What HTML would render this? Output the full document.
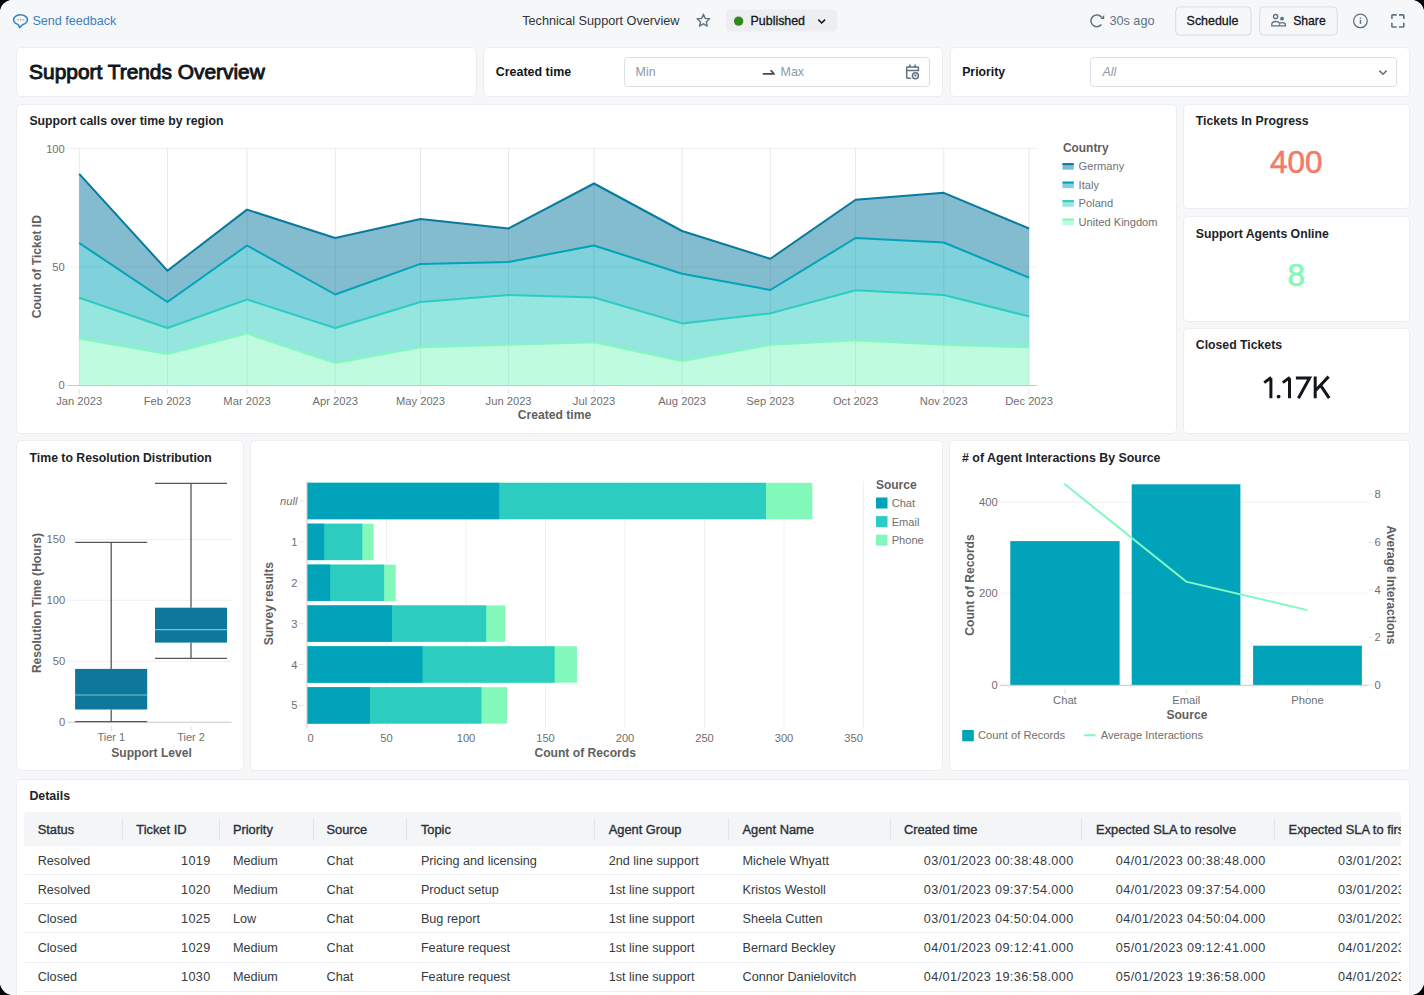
<!DOCTYPE html>
<html><head><meta charset="utf-8">
<style>
html,body{margin:0;padding:0;background:#000;width:1424px;height:995px;overflow:hidden}
*{box-sizing:border-box}
#page{position:absolute;left:0;top:0;width:1424px;height:995px;background:#f6f7f9;overflow:hidden;font-family:"Liberation Sans",sans-serif;color:#11171c}
.card{position:absolute;background:#fff;border:1px solid #ebedf0;border-radius:4.5px}
.t{position:absolute;white-space:nowrap;line-height:1}
.b{font-weight:bold}
svg{position:absolute;left:0;top:0}
</style></head><body><div id="page">


<!-- cards -->
<div class="card" style="left:16.3px;top:47px;width:461.0px;height:49.7px"></div>
<div class="card" style="left:483.2px;top:47px;width:460.3px;height:49.7px"></div>
<div class="card" style="left:949.5px;top:47px;width:460.3px;height:49.7px"></div>

<div class="card" style="left:16.3px;top:103.8px;width:1160.7px;height:330.1px"></div>
<div class="card" style="left:1183.4px;top:103.8px;width:226.4px;height:105.5px"></div>
<div class="card" style="left:1183.4px;top:216.1px;width:226.4px;height:105.5px"></div>
<div class="card" style="left:1183.4px;top:328.4px;width:226.4px;height:105.5px"></div>

<div class="card" style="left:16.3px;top:440.2px;width:228.0px;height:331.1px"></div>
<div class="card" style="left:249.9px;top:440.2px;width:693.6px;height:331.1px"></div>
<div class="card" style="left:949.0px;top:440.2px;width:460.8px;height:331.1px"></div>

<div class="card" style="left:16.3px;top:778.5px;width:1393.5px;height:240.0px"></div>


<!-- top bar -->
<svg width="1424" height="40" style="left:0;top:0">
  <path d="M18.3 24.63A6.9 5.1 0 1 1 22.5 24.68L19.6 27.6Z" fill="none" stroke="#3a80c2" stroke-width="1.5" stroke-linejoin="round"/>
  <g fill="#3a80c2" fill-opacity="0.75"><circle cx="18" cy="19.8" r=".75"/><circle cx="20.6" cy="19.8" r=".75"/><circle cx="23.2" cy="19.8" r=".75"/></g>
  <path d="M703.40 14.20L705.16 18.37L709.68 18.76L706.25 21.73L707.28 26.14L703.40 23.80L699.52 26.14L700.55 21.73L697.12 18.76L701.64 18.37Z" fill="none" stroke="#5f7281" stroke-width="1.35" stroke-linejoin="round"/>
  <rect x="726.1" y="9.6" width="110.8" height="21.9" rx="4" fill="#eceef1"/>
  <circle cx="738.6" cy="21.1" r="4.7" fill="#2f8a1c"/>
  <path d="M818.3 19.6l3.4 3.4 3.4-3.4" fill="none" stroke="#11171c" stroke-width="1.5"/>
  <path d="M1101.6 17.3A5.9 5.9 0 1 0 1101.4 24.6" fill="none" stroke="#5f7281" stroke-width="1.5"/><path d="M1104.2 15.1V18.9H1100.3Z" fill="#5f7281"/>
  
  <rect x="1175.7" y="6.9" width="75.3" height="28.2" rx="4" fill="#f6f7f9" stroke="#d6dce2" stroke-width="1"/>
  <rect x="1259.7" y="6.9" width="77.5" height="28.2" rx="4" fill="#f6f7f9" stroke="#d6dce2" stroke-width="1"/>
  <g fill="none" stroke="#5f7281" stroke-width="1.35">
    <circle cx="1275.6" cy="16.6" r="2.1"/>
    <path d="M1271.8 25.9H1285.4V24.8C1285.4 23.4 1284 22.6 1282.2 22.6C1281.2 22.6 1280.3 22.9 1279.7 23.3C1279 22.1 1277.5 21.5 1275.6 21.5C1273.4 21.5 1271.8 22.6 1271.8 24.6Z"/>
    <path d="M1279.5 25.9V24.2"/>
  </g>
  <circle cx="1282" cy="18.7" r="1.9" fill="#5f7281"/>
  <circle cx="1360.4" cy="20.9" r="6.8" fill="none" stroke="#5f7281" stroke-width="1.3"/>
  <rect x="1359.75" y="19.9" width="1.4" height="4" fill="#5f7281"/>
  <circle cx="1360.45" cy="18.2" r=".8" fill="#5f7281"/>
  <path d="M1391.9 18.9V15.6Q1391.9 14.9 1392.6 14.9H1396.7M1399 14.9H1403.1Q1403.8 14.9 1403.8 15.6V18.9M1403.8 22.8V26.3Q1403.8 27 1403.1 27H1399M1396.7 27H1392.6Q1391.9 27 1391.9 26.3V22.8" fill="none" stroke="#5f7281" stroke-width="1.6"/>
</svg>
<div class="t" style="left:32.4px;top:14.6px;font-size:12.6px;color:#3a80c2">Send feedback</div>
<div class="t" style="left:522.2px;top:14.5px;font-size:12.7px;color:#2e3439">Technical Support Overview</div>
<div class="t" style="left:750.6px;top:14.6px;font-size:12.4px;color:#11171c;-webkit-text-stroke:0.3px #11171c">Published</div>
<div class="t" style="left:1109.4px;top:14.5px;font-size:12.7px;color:#5f7281">30s ago</div>
<div class="t" style="left:1186.6px;top:14.6px;font-size:12.45px;color:#11171c;-webkit-text-stroke:0.3px #11171c">Schedule</div>
<div class="t" style="left:1293.2px;top:14.6px;font-size:12.2px;color:#11171c;-webkit-text-stroke:0.3px #11171c">Share</div>

<!-- filter row -->
<div class="t" style="left:29.1px;top:62.0px;font-size:20.9px;color:#11171c;-webkit-text-stroke:0.95px #11171c">Support Trends Overview</div>
<div class="t b" style="left:495.8px;top:66px;font-size:12.45px;color:#11171c">Created time</div>
<div style="position:absolute;left:624.1px;top:57.1px;width:305.5px;height:29.5px;border:1px solid #dae0e6;border-radius:4px;background:#fff"></div>
<div class="t" style="left:635.6px;top:66px;font-size:12.4px;color:#8c9aa6">Min</div>
<div class="t" style="left:780.6px;top:66px;font-size:12.4px;color:#8c9aa6">Max</div>
<svg width="1424" height="100" style="left:0;top:0">
  <path d="M762.8 73.9H774L770.7 70.3" fill="none" stroke="#454b51" stroke-width="1.7" stroke-linejoin="round"/>
  <g fill="none" stroke="#5f7281" stroke-width="1.5" stroke-linecap="round" stroke-linejoin="round">
    <path d="M910.4 78.2H907.4Q906.7 78.2 906.7 77.5V67.6Q906.7 66.9 907.4 66.9H917.7Q918.4 66.9 918.4 67.6V70.5"/>
    <path d="M906.7 70.5H918.4"/>
    <path d="M909.9 65V66.9M915.1 65V66.9"/>
    <circle cx="915.4" cy="75.8" r="3"/>
    <path d="M914.6 74.9L915.4 76.2L916.2 74.9" stroke-width="1.1"/>
  </g>
  <path d="M1379.4 70.6l3.6 3.6 3.6-3.6" fill="none" stroke="#5f7281" stroke-width="1.6"/>
</svg>
<div class="t b" style="left:962.2px;top:66px;font-size:12.25px;color:#11171c">Priority</div>
<div style="position:absolute;left:1090.4px;top:57.1px;width:306.3px;height:29.5px;border:1px solid #dae0e6;border-radius:4px;background:transparent"></div>
<div class="t" style="left:1102.4px;top:66px;font-size:12.4px;color:#8c9aa6;font-style:italic">All</div>


<svg width="1424" height="440" style="left:0;top:0">
<g stroke="#eff0f1" stroke-width="1">
<path d="M67.3 148.5H1037.4M67.3 266.9H1037.4"/>
<path d="M79.2 148.5V385.3M167.4 148.5V385.3M247.0 148.5V385.3M335.2 148.5V385.3M420.5 148.5V385.3M508.6 148.5V385.3M594.0 148.5V385.3M682.1 148.5V385.3M770.3 148.5V385.3M855.6 148.5V385.3M943.8 148.5V385.3M1029.1 148.5V385.3"/>
</g>
<path d="M79.2,338.5 L167.4,354.0 L247.0,333.5 L335.2,363.0 L420.5,347.3 L508.6,344.8 L594.0,342.3 L682.1,361.1 L770.3,344.8 L855.6,340.3 L943.8,344.8 L1029.1,347.3 L1029.1,385.3 L943.8,385.3 L855.6,385.3 L770.3,385.3 L682.1,385.3 L594.0,385.3 L508.6,385.3 L420.5,385.3 L335.2,385.3 L247.0,385.3 L167.4,385.3 L79.2,385.3Z" fill="#80f8c0" fill-opacity="0.5"/>
<path d="M79.2,297.8 L167.4,328.0 L247.0,299.5 L335.2,328.0 L420.5,302.0 L508.6,295.0 L594.0,297.5 L682.1,323.4 L770.3,313.4 L855.6,290.3 L943.8,295.0 L1029.1,316.4 L1029.1,347.3 L943.8,344.8 L855.6,340.3 L770.3,344.8 L682.1,361.1 L594.0,342.3 L508.6,344.8 L420.5,347.3 L335.2,363.0 L247.0,333.5 L167.4,354.0 L79.2,338.5Z" fill="#2ccdc0" fill-opacity="0.5"/>
<path d="M79.2,243.0 L167.4,302.0 L247.0,245.5 L335.2,294.5 L420.5,263.9 L508.6,261.9 L594.0,245.5 L682.1,273.7 L770.3,290.0 L855.6,238.0 L943.8,242.5 L1029.1,277.7 L1029.1,316.4 L943.8,295.0 L855.6,290.3 L770.3,313.4 L682.1,323.4 L594.0,297.5 L508.6,295.0 L420.5,302.0 L335.2,328.0 L247.0,299.5 L167.4,328.0 L79.2,297.8Z" fill="#00a3b9" fill-opacity="0.5"/>
<path d="M79.2,173.9 L167.4,270.7 L247.0,209.6 L335.2,238.0 L420.5,219.1 L508.6,228.4 L594.0,183.5 L682.1,231.0 L770.3,258.8 L855.6,199.8 L943.8,192.8 L1029.1,228.5 L1029.1,277.7 L943.8,242.5 L855.6,238.0 L770.3,290.0 L682.1,273.7 L594.0,245.5 L508.6,261.9 L420.5,263.9 L335.2,294.5 L247.0,245.5 L167.4,302.0 L79.2,243.0Z" fill="#077a9d" fill-opacity="0.5"/>
<g stroke="#000" stroke-opacity="0.03" stroke-width="1">
<path d="M79.2 148.5V385.3M167.4 148.5V385.3M247.0 148.5V385.3M335.2 148.5V385.3M420.5 148.5V385.3M508.6 148.5V385.3M594.0 148.5V385.3M682.1 148.5V385.3M770.3 148.5V385.3M855.6 148.5V385.3M943.8 148.5V385.3M1029.1 148.5V385.3"/>
</g>
<polyline points="79.2,338.5 167.4,354.0 247.0,333.5 335.2,363.0 420.5,347.3 508.6,344.8 594.0,342.3 682.1,361.1 770.3,344.8 855.6,340.3 943.8,344.8 1029.1,347.3" fill="none" stroke="#80f8c0" stroke-width="2" stroke-linejoin="round"/>
<polyline points="79.2,297.8 167.4,328.0 247.0,299.5 335.2,328.0 420.5,302.0 508.6,295.0 594.0,297.5 682.1,323.4 770.3,313.4 855.6,290.3 943.8,295.0 1029.1,316.4" fill="none" stroke="#2ccdc0" stroke-width="2" stroke-linejoin="round"/>
<polyline points="79.2,243.0 167.4,302.0 247.0,245.5 335.2,294.5 420.5,263.9 508.6,261.9 594.0,245.5 682.1,273.7 770.3,290.0 855.6,238.0 943.8,242.5 1029.1,277.7" fill="none" stroke="#00a3b9" stroke-width="2" stroke-linejoin="round"/>
<polyline points="79.2,173.9 167.4,270.7 247.0,209.6 335.2,238.0 420.5,219.1 508.6,228.4 594.0,183.5 682.1,231.0 770.3,258.8 855.6,199.8 943.8,192.8 1029.1,228.5" fill="none" stroke="#077a9d" stroke-width="2" stroke-linejoin="round"/>
<path d="M67.3 385.5H1037.4" stroke="#c8c8c8" stroke-width="1"/>
<path d="M79.2 389V394M167.4 389V394M247.0 389V394M335.2 389V394M420.5 389V394M508.6 389V394M594.0 389V394M682.1 389V394M770.3 389V394M855.6 389V394M943.8 389V394M1029.1 389V394" stroke="#e3e3e3" stroke-width="1"/>
<g font-family="Liberation Sans" font-size="11.2" fill="#6f6f6f" text-anchor="end">
<text x="64.8" y="152.5">100</text><text x="64.8" y="271">50</text><text x="64.8" y="389.4">0</text>
</g>
<g font-family="Liberation Sans" font-size="11.2" fill="#6f6f6f" text-anchor="middle">
<text x="79.2" y="404.5">Jan 2023</text>
<text x="167.4" y="404.5">Feb 2023</text>
<text x="247.0" y="404.5">Mar 2023</text>
<text x="335.2" y="404.5">Apr 2023</text>
<text x="420.5" y="404.5">May 2023</text>
<text x="508.6" y="404.5">Jun 2023</text>
<text x="594.0" y="404.5">Jul 2023</text>
<text x="682.1" y="404.5">Aug 2023</text>
<text x="770.3" y="404.5">Sep 2023</text>
<text x="855.6" y="404.5">Oct 2023</text>
<text x="943.8" y="404.5">Nov 2023</text>
<text x="1029.1" y="404.5">Dec 2023</text>
</g>
<g font-family="Liberation Sans" font-size="12.1" font-weight="bold" fill="#5f5f5f" text-anchor="middle">
<text x="554.5" y="418.9">Created time</text>
<text transform="translate(40.6 266.7) rotate(-90)">Count of Ticket ID</text>
</g>
<text x="1063" y="151.6" font-family="Liberation Sans" font-size="11.9" font-weight="bold" fill="#5f5f5f">Country</text>
<rect x="1062.5" y="163.1" width="11.3" height="6.6" fill="#077a9d" fill-opacity="0.5"/>
<rect x="1062.5" y="163.1" width="11.3" height="2" fill="#077a9d"/>
<text x="1078.6" y="170.2" font-family="Liberation Sans" font-size="11.1" fill="#6f6f6f">Germany</text>
<rect x="1062.5" y="181.6" width="11.3" height="6.6" fill="#00a3b9" fill-opacity="0.5"/>
<rect x="1062.5" y="181.6" width="11.3" height="2" fill="#00a3b9"/>
<text x="1078.6" y="188.7" font-family="Liberation Sans" font-size="11.1" fill="#6f6f6f">Italy</text>
<rect x="1062.5" y="200.1" width="11.3" height="6.6" fill="#2ccdc0" fill-opacity="0.5"/>
<rect x="1062.5" y="200.1" width="11.3" height="2" fill="#2ccdc0"/>
<text x="1078.6" y="207.2" font-family="Liberation Sans" font-size="11.1" fill="#6f6f6f">Poland</text>
<rect x="1062.5" y="218.6" width="11.3" height="6.6" fill="#80f8c0" fill-opacity="0.5"/>
<rect x="1062.5" y="218.6" width="11.3" height="2" fill="#80f8c0"/>
<text x="1078.6" y="225.7" font-family="Liberation Sans" font-size="11.1" fill="#6f6f6f">United Kingdom</text>
</svg>
<!-- titles -->
<div class="t b" style="left:29.4px;top:114.9px;font-size:12.25px;color:#1c2328">Support calls over time by region</div>
<div class="t b" style="left:1195.8px;top:114.9px;font-size:12.25px;color:#1c2328">Tickets In Progress</div>
<div class="t b" style="left:1195.8px;top:227.5px;font-size:12.25px;color:#1c2328">Support Agents Online</div>
<div class="t b" style="left:1195.8px;top:339.1px;font-size:12.25px;color:#1c2328">Closed Tickets</div>
<svg width="1424" height="440" style="left:0;top:0">
<g font-family="Liberation Sans" font-size="31.5" text-anchor="middle">
<text x="1296.2" y="173.2" fill="#f57a69" stroke="#f57a69" stroke-width="0.6">400</text>
<text x="1296.2" y="285.6" fill="#84f7bb" stroke="#84f7bb" stroke-width="0.7">8</text>
</g><g fill="none" stroke="#11171c" stroke-width="3" stroke-linejoin="miter">
<path d="M1270.9 398.2V378.2M1271.2 377.4L1264.2 382.6"/>
<path d="M1289.5 398.2V378.2M1289.8 377.4L1282.8 382.6"/>
<path d="M1295.9 378H1309.6L1298.4 398.2" stroke-linejoin="miter"/>
<path d="M1315.2 376.6V398.2M1315.8 390.2L1328.6 376.6M1320.6 385.4L1329.2 398.2"/>
</g><circle cx="1278.6" cy="396.6" r="1.9" fill="#11171c"/><g>
</g>
</svg>
<div class="t b" style="left:29.6px;top:452px;font-size:12.25px;color:#1c2328">Time to Resolution Distribution</div>
<div class="t b" style="left:962px;top:452px;font-size:12.4px;color:#1c2328"># of Agent Interactions By Source</div>
<div class="t b" style="left:29.4px;top:789.5px;font-size:12.4px;color:#1c2328">Details</div>

<svg width="1424" height="995" style="left:0;top:0">
<g stroke="#eff0f1" stroke-width="1">
<path d="M67.6 661.3H231.5"/>
<path d="M67.6 600.2H231.5"/>
<path d="M67.6 539.3H231.5"/>
</g>
<path d="M67.6 722.2H231.5" stroke="#c8c8c8" stroke-width="1"/>
<path d="M111.2 726V731M191 726V731" stroke="#e3e3e3"/>
<g font-family="Liberation Sans" font-size="11.2" fill="#6f6f6f" text-anchor="end">
<text x="65.2" y="726.2">0</text>
<text x="65.2" y="665.3">50</text>
<text x="65.2" y="604.2">100</text>
<text x="65.2" y="543.3">150</text>
</g>
<path d="M111.2 542.3V668.9M111.2 709.5V721.6M75.1 542.3H147.2M75.1 721.6H147.2" stroke="#575757" stroke-width="1.3"/>
<rect x="75.1" y="668.9" width="72.1" height="40.6" fill="#0d789c"/>
<path d="M75.1 695H147.2" stroke="#7fc3d6" stroke-width="1.2"/>
<path d="M191 483.3V607.7M191 642.6V658.3M155 483.3H227M155 658.3H227" stroke="#575757" stroke-width="1.3"/>
<rect x="155" y="607.7" width="72.0" height="34.9" fill="#0d789c"/>
<path d="M155 629.7H227" stroke="#7fc3d6" stroke-width="1.2"/>
<g font-family="Liberation Sans" font-size="11" fill="#6f6f6f" text-anchor="middle"><text x="111.3" y="741.1">Tier 1</text><text x="191" y="741.1">Tier 2</text></g>
<g font-family="Liberation Sans" font-size="12.1" font-weight="bold" fill="#5f5f5f" text-anchor="middle"><text x="151.5" y="756.6">Support Level</text>
<text transform="translate(40.6 603) rotate(-90)">Resolution Time (Hours)</text></g>
<g stroke="#eff0f1" stroke-width="1">
<path d="M386.5 481.3V728M466.0 481.3V728M545.5 481.3V728M625.0 481.3V728M704.5 481.3V728M784.0 481.3V728M863.5 481.3V728"/>
</g>
<rect x="307.0" y="482.8" width="505.4" height="36.4" fill="#82f9bb"/>
<rect x="307.0" y="482.8" width="459.0" height="36.4" fill="#2ccdc0"/>
<rect x="307.0" y="482.8" width="192.2" height="36.4" fill="#00a3b9"/>
<path d="M299 501.0H303.5" stroke="#e3e3e3"/>
<text x="297.5" y="505.0" font-family="Liberation Sans" font-size="11.2" fill="#6f6f6f" text-anchor="end" font-style="italic">null</text>
<rect x="307.0" y="523.7" width="66.6" height="36.4" fill="#82f9bb"/>
<rect x="307.0" y="523.7" width="55.3" height="36.4" fill="#2ccdc0"/>
<rect x="307.0" y="523.7" width="17.2" height="36.4" fill="#00a3b9"/>
<path d="M299 541.9H303.5" stroke="#e3e3e3"/>
<text x="297.5" y="545.9" font-family="Liberation Sans" font-size="11.2" fill="#6f6f6f" text-anchor="end">1</text>
<rect x="307.0" y="564.6" width="88.7" height="36.4" fill="#82f9bb"/>
<rect x="307.0" y="564.6" width="77.1" height="36.4" fill="#2ccdc0"/>
<rect x="307.0" y="564.6" width="23.2" height="36.4" fill="#00a3b9"/>
<path d="M299 582.8H303.5" stroke="#e3e3e3"/>
<text x="297.5" y="586.8" font-family="Liberation Sans" font-size="11.2" fill="#6f6f6f" text-anchor="end">2</text>
<rect x="307.0" y="605.4" width="198.1" height="36.4" fill="#82f9bb"/>
<rect x="307.0" y="605.4" width="179.2" height="36.4" fill="#2ccdc0"/>
<rect x="307.0" y="605.4" width="85.0" height="36.4" fill="#00a3b9"/>
<path d="M299 623.6H303.5" stroke="#e3e3e3"/>
<text x="297.5" y="627.6" font-family="Liberation Sans" font-size="11.2" fill="#6f6f6f" text-anchor="end">3</text>
<rect x="307.0" y="646.3" width="269.9" height="36.4" fill="#82f9bb"/>
<rect x="307.0" y="646.3" width="247.7" height="36.4" fill="#2ccdc0"/>
<rect x="307.0" y="646.3" width="115.5" height="36.4" fill="#00a3b9"/>
<path d="M299 664.5H303.5" stroke="#e3e3e3"/>
<text x="297.5" y="668.5" font-family="Liberation Sans" font-size="11.2" fill="#6f6f6f" text-anchor="end">4</text>
<rect x="307.0" y="687.2" width="200.1" height="36.4" fill="#82f9bb"/>
<rect x="307.0" y="687.2" width="174.5" height="36.4" fill="#2ccdc0"/>
<rect x="307.0" y="687.2" width="62.9" height="36.4" fill="#00a3b9"/>
<path d="M299 705.4H303.5" stroke="#e3e3e3"/>
<text x="297.5" y="709.4" font-family="Liberation Sans" font-size="11.2" fill="#6f6f6f" text-anchor="end">5</text>
<path d="M307 481.3V728" stroke="#c8c8c8" stroke-width="1"/>
<g font-family="Liberation Sans" font-size="11.2" fill="#6f6f6f">
<text x="307.5" y="742.4" text-anchor="start">0</text>
<text x="386.5" y="742.4" text-anchor="middle">50</text>
<text x="466.0" y="742.4" text-anchor="middle">100</text>
<text x="545.5" y="742.4" text-anchor="middle">150</text>
<text x="625.0" y="742.4" text-anchor="middle">200</text>
<text x="704.5" y="742.4" text-anchor="middle">250</text>
<text x="784.0" y="742.4" text-anchor="middle">300</text>
<text x="863.0" y="742.4" text-anchor="end">350</text>
</g>
<g font-family="Liberation Sans" font-size="12.1" font-weight="bold" fill="#5f5f5f" text-anchor="middle"><text x="585.2" y="756.7">Count of Records</text>
<text transform="translate(273.2 603.7) rotate(-90)">Survey results</text></g>
<text x="875.9" y="489" font-family="Liberation Sans" font-size="12" font-weight="bold" fill="#5f5f5f">Source</text>
<rect x="876" y="497.5" width="11.5" height="11" fill="#00a3b9"/>
<text x="891.7" y="507.0" font-family="Liberation Sans" font-size="11.1" fill="#6f6f6f">Chat</text>
<rect x="876" y="516.1" width="11.5" height="11" fill="#2ccdc0"/>
<text x="891.7" y="525.6" font-family="Liberation Sans" font-size="11.1" fill="#6f6f6f">Email</text>
<rect x="876" y="534.7" width="11.5" height="11" fill="#82f9bb"/>
<text x="891.7" y="544.2" font-family="Liberation Sans" font-size="11.1" fill="#6f6f6f">Phone</text>
<g stroke="#eff0f1" stroke-width="1"><path d="M1000.3 593.1H1368.5M1000.3 502.2H1368.5"/></g>
<rect x="1010.3" y="541.1" width="109.3" height="144.0" fill="#00a3b9"/>
<rect x="1131.7" y="484.3" width="108.7" height="200.8" fill="#00a3b9"/>
<rect x="1253.1" y="645.7" width="108.8" height="39.4" fill="#00a3b9"/>
<path d="M1000.3 685.3H1368.5" stroke="#c8c8c8" stroke-width="1"/>
<path d="M1064.8 689V694M1186.2 689V694M1307.5 689V694" stroke="#e3e3e3"/>
<polyline points="1064.3,483.8 1186.2,581.6 1307.3,610.1" fill="none" stroke="#80f8c0" stroke-width="2"/>
<g font-family="Liberation Sans" font-size="11.2" fill="#6f6f6f" text-anchor="end"><text x="997.7" y="506.2">400</text><text x="997.7" y="597.1">200</text><text x="997.7" y="689.1">0</text></g>
<g stroke="#e3e3e3"><path d="M1368.5 494.1H1373"/><path d="M1368.5 542.3H1373"/><path d="M1368.5 590H1373"/><path d="M1368.5 637.3H1373"/><path d="M1368.5 684.9H1373"/></g>
<g font-family="Liberation Sans" font-size="11.2" fill="#6f6f6f"><text x="1374.5" y="498.1">8</text><text x="1374.5" y="546.3">6</text><text x="1374.5" y="594.0">4</text><text x="1374.5" y="641.3">2</text><text x="1374.5" y="688.9">0</text></g>
<g font-family="Liberation Sans" font-size="11.2" fill="#6f6f6f" text-anchor="middle"><text x="1064.9" y="704">Chat</text><text x="1186.2" y="704">Email</text><text x="1307.5" y="704">Phone</text></g>
<g font-family="Liberation Sans" font-size="12.1" font-weight="bold" fill="#5f5f5f" text-anchor="middle"><text x="1186.9" y="719">Source</text>
<text transform="translate(973.5 585) rotate(-90)">Count of Records</text>
<text transform="translate(1387.3 585) rotate(90)">Average Interactions</text></g>
<rect x="962.2" y="730" width="11.6" height="11.3" fill="#00a3b9"/>
<text x="978" y="739.3" font-family="Liberation Sans" font-size="11.2" fill="#6f6f6f">Count of Records</text>
<path d="M1084.2 735.3H1095.5" stroke="#80f8c0" stroke-width="2"/>
<text x="1100.7" y="739.3" font-family="Liberation Sans" font-size="11.2" fill="#6f6f6f">Average Interactions</text>
</svg>
<div style="position:absolute;left:24.3px;top:812.3px;width:1377.1px;height:33.3px;background:#f4f5f7;border-radius:4px 4px 0 0"></div>
<div style="position:absolute;left:121.8px;top:817.7px;width:1px;height:22px;background:#e1e5e9"></div>
<div style="position:absolute;left:218.7px;top:817.7px;width:1px;height:22px;background:#e1e5e9"></div>
<div style="position:absolute;left:312.8px;top:817.7px;width:1px;height:22px;background:#e1e5e9"></div>
<div style="position:absolute;left:406.0px;top:817.7px;width:1px;height:22px;background:#e1e5e9"></div>
<div style="position:absolute;left:594.4px;top:817.7px;width:1px;height:22px;background:#e1e5e9"></div>
<div style="position:absolute;left:727.8px;top:817.7px;width:1px;height:22px;background:#e1e5e9"></div>
<div style="position:absolute;left:889.5px;top:817.7px;width:1px;height:22px;background:#e1e5e9"></div>
<div style="position:absolute;left:1081.2px;top:817.7px;width:1px;height:22px;background:#e1e5e9"></div>
<div style="position:absolute;left:1273.7px;top:817.7px;width:1px;height:22px;background:#e1e5e9"></div>
<div style="position:absolute;left:0;top:0;width:1401.4px;height:995px;overflow:hidden">
<div class="t" style="left:37.7px;top:823.5px;font-size:12.85px;color:#283037;-webkit-text-stroke:0.35px #283037">Status</div>
<div class="t" style="left:136.3px;top:823.5px;font-size:12.85px;color:#283037;-webkit-text-stroke:0.35px #283037">Ticket ID</div>
<div class="t" style="left:232.9px;top:823.5px;font-size:12.85px;color:#283037;-webkit-text-stroke:0.35px #283037">Priority</div>
<div class="t" style="left:326.5px;top:823.5px;font-size:12.85px;color:#283037;-webkit-text-stroke:0.35px #283037">Source</div>
<div class="t" style="left:420.9px;top:823.5px;font-size:12.85px;color:#283037;-webkit-text-stroke:0.35px #283037">Topic</div>
<div class="t" style="left:608.7px;top:823.5px;font-size:12.85px;color:#283037;-webkit-text-stroke:0.35px #283037">Agent Group</div>
<div class="t" style="left:742.5px;top:823.5px;font-size:12.85px;color:#283037;-webkit-text-stroke:0.35px #283037">Agent Name</div>
<div class="t" style="left:903.9px;top:823.5px;font-size:12.85px;color:#283037;-webkit-text-stroke:0.35px #283037">Created time</div>
<div class="t" style="left:1096.1px;top:823.5px;font-size:12.85px;color:#283037;-webkit-text-stroke:0.35px #283037">Expected SLA to resolve</div>
<div class="t" style="left:1288.6px;top:823.5px;font-size:12.85px;color:#283037;-webkit-text-stroke:0.35px #283037">Expected SLA to first response</div>
<div style="position:absolute;left:24.3px;top:874.1px;width:1377.1px;height:1px;background:#eef0f3"></div>
<div style="position:absolute;left:24.3px;top:903.0px;width:1377.1px;height:1px;background:#eef0f3"></div>
<div style="position:absolute;left:24.3px;top:932.3px;width:1377.1px;height:1px;background:#eef0f3"></div>
<div style="position:absolute;left:24.3px;top:961.7px;width:1377.1px;height:1px;background:#eef0f3"></div>
<div style="position:absolute;left:24.3px;top:990.7px;width:1377.1px;height:1px;background:#eef0f3"></div>
<div class="t" style="left:37.7px;top:854.9px;font-size:12.65px;color:#343b41">Resolved</div>
<div class="t" style="left:232.9px;top:854.9px;font-size:12.65px;color:#343b41">Medium</div>
<div class="t" style="left:326.5px;top:854.9px;font-size:12.65px;color:#343b41">Chat</div>
<div class="t" style="left:420.9px;top:854.9px;font-size:12.65px;color:#343b41">Pricing and licensing</div>
<div class="t" style="left:608.7px;top:854.9px;font-size:12.65px;color:#343b41">2nd line support</div>
<div class="t" style="left:742.5px;top:854.9px;font-size:12.65px;color:#343b41">Michele Whyatt</div>
<div class="t" style="right:1190.8px;top:854.9px;font-size:12.65px;color:#343b41;letter-spacing:0.35px">1019</div>
<div class="t" style="right:327.8px;top:854.9px;font-size:12.65px;color:#343b41;letter-spacing:0.4px">03/01/2023 00:38:48.000</div>
<div class="t" style="right:135.8px;top:854.9px;font-size:12.65px;color:#343b41;letter-spacing:0.4px">04/01/2023 00:38:48.000</div>
<div class="t" style="left:1338px;top:854.9px;font-size:12.65px;color:#343b41;letter-spacing:0.4px">03/01/2023 00:38:48.000</div>
<div class="t" style="left:37.7px;top:883.9px;font-size:12.65px;color:#343b41">Resolved</div>
<div class="t" style="left:232.9px;top:883.9px;font-size:12.65px;color:#343b41">Medium</div>
<div class="t" style="left:326.5px;top:883.9px;font-size:12.65px;color:#343b41">Chat</div>
<div class="t" style="left:420.9px;top:883.9px;font-size:12.65px;color:#343b41">Product setup</div>
<div class="t" style="left:608.7px;top:883.9px;font-size:12.65px;color:#343b41">1st line support</div>
<div class="t" style="left:742.5px;top:883.9px;font-size:12.65px;color:#343b41">Kristos Westoll</div>
<div class="t" style="right:1190.8px;top:883.9px;font-size:12.65px;color:#343b41;letter-spacing:0.35px">1020</div>
<div class="t" style="right:327.8px;top:883.9px;font-size:12.65px;color:#343b41;letter-spacing:0.4px">03/01/2023 09:37:54.000</div>
<div class="t" style="right:135.8px;top:883.9px;font-size:12.65px;color:#343b41;letter-spacing:0.4px">04/01/2023 09:37:54.000</div>
<div class="t" style="left:1338px;top:883.9px;font-size:12.65px;color:#343b41;letter-spacing:0.4px">03/01/2023 09:37:54.000</div>
<div class="t" style="left:37.7px;top:913.1px;font-size:12.65px;color:#343b41">Closed</div>
<div class="t" style="left:232.9px;top:913.1px;font-size:12.65px;color:#343b41">Low</div>
<div class="t" style="left:326.5px;top:913.1px;font-size:12.65px;color:#343b41">Chat</div>
<div class="t" style="left:420.9px;top:913.1px;font-size:12.65px;color:#343b41">Bug report</div>
<div class="t" style="left:608.7px;top:913.1px;font-size:12.65px;color:#343b41">1st line support</div>
<div class="t" style="left:742.5px;top:913.1px;font-size:12.65px;color:#343b41">Sheela Cutten</div>
<div class="t" style="right:1190.8px;top:913.1px;font-size:12.65px;color:#343b41;letter-spacing:0.35px">1025</div>
<div class="t" style="right:327.8px;top:913.1px;font-size:12.65px;color:#343b41;letter-spacing:0.4px">03/01/2023 04:50:04.000</div>
<div class="t" style="right:135.8px;top:913.1px;font-size:12.65px;color:#343b41;letter-spacing:0.4px">04/01/2023 04:50:04.000</div>
<div class="t" style="left:1338px;top:913.1px;font-size:12.65px;color:#343b41;letter-spacing:0.4px">03/01/2023 04:50:04.000</div>
<div class="t" style="left:37.7px;top:942.3px;font-size:12.65px;color:#343b41">Closed</div>
<div class="t" style="left:232.9px;top:942.3px;font-size:12.65px;color:#343b41">Medium</div>
<div class="t" style="left:326.5px;top:942.3px;font-size:12.65px;color:#343b41">Chat</div>
<div class="t" style="left:420.9px;top:942.3px;font-size:12.65px;color:#343b41">Feature request</div>
<div class="t" style="left:608.7px;top:942.3px;font-size:12.65px;color:#343b41">1st line support</div>
<div class="t" style="left:742.5px;top:942.3px;font-size:12.65px;color:#343b41">Bernard Beckley</div>
<div class="t" style="right:1190.8px;top:942.3px;font-size:12.65px;color:#343b41;letter-spacing:0.35px">1029</div>
<div class="t" style="right:327.8px;top:942.3px;font-size:12.65px;color:#343b41;letter-spacing:0.4px">04/01/2023 09:12:41.000</div>
<div class="t" style="right:135.8px;top:942.3px;font-size:12.65px;color:#343b41;letter-spacing:0.4px">05/01/2023 09:12:41.000</div>
<div class="t" style="left:1338px;top:942.3px;font-size:12.65px;color:#343b41;letter-spacing:0.4px">04/01/2023 09:12:41.000</div>
<div class="t" style="left:37.7px;top:971.4px;font-size:12.65px;color:#343b41">Closed</div>
<div class="t" style="left:232.9px;top:971.4px;font-size:12.65px;color:#343b41">Medium</div>
<div class="t" style="left:326.5px;top:971.4px;font-size:12.65px;color:#343b41">Chat</div>
<div class="t" style="left:420.9px;top:971.4px;font-size:12.65px;color:#343b41">Feature request</div>
<div class="t" style="left:608.7px;top:971.4px;font-size:12.65px;color:#343b41">1st line support</div>
<div class="t" style="left:742.5px;top:971.4px;font-size:12.65px;color:#343b41">Connor Danielovitch</div>
<div class="t" style="right:1190.8px;top:971.4px;font-size:12.65px;color:#343b41;letter-spacing:0.35px">1030</div>
<div class="t" style="right:327.8px;top:971.4px;font-size:12.65px;color:#343b41;letter-spacing:0.4px">04/01/2023 19:36:58.000</div>
<div class="t" style="right:135.8px;top:971.4px;font-size:12.65px;color:#343b41;letter-spacing:0.4px">05/01/2023 19:36:58.000</div>
<div class="t" style="left:1338px;top:971.4px;font-size:12.65px;color:#343b41;letter-spacing:0.4px">04/01/2023 19:36:58.000</div>
</div>
<svg width="1424" height="995" style="left:0;top:0"><g fill="#000">
<path d="M0 0H10.2L6.8 1.2L5 2.4L3.6 3.6L2.4 5L1.2 6.8L0 10.2Z"/>
<path d="M1424 0H1413.8L1417.2 1.2L1419 2.4L1420.4 3.6L1421.6 5L1422.8 6.8L1424 10.2Z"/>
<path d="M0 995H10.8L7.2 993.8L5.2 992.6L3.7 991.1L2.4 989.4L1.2 987.4L0 984.6Z"/>
<path d="M1424 995H1412.8L1416.6 993.8L1418.7 992.6L1420.2 991.1L1421.5 989.4L1422.7 987.4L1424 984.4Z"/>
</g></svg>

</div></body></html>
